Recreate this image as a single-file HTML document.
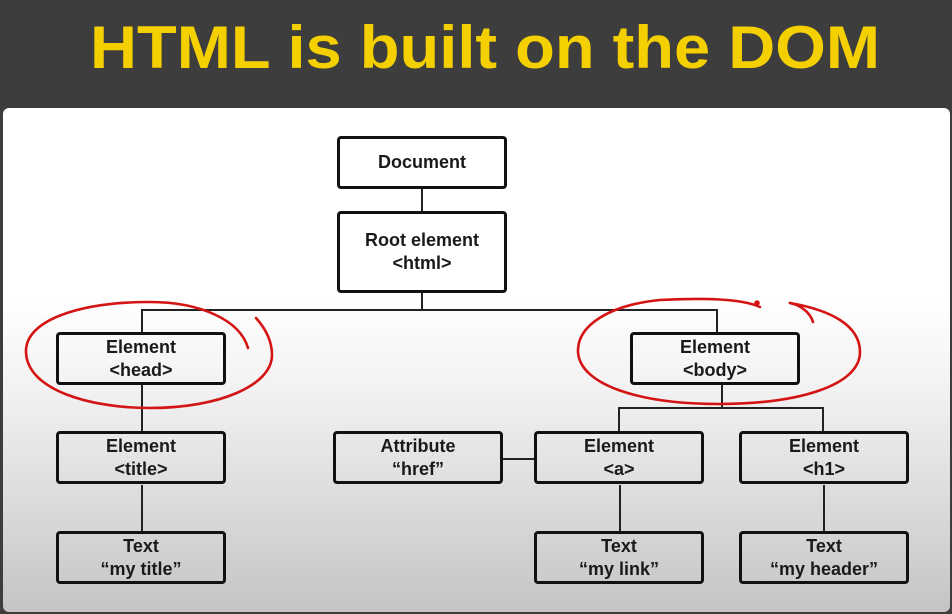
<!DOCTYPE html>
<html><head><meta charset="utf-8"><style>
*{margin:0;padding:0;box-sizing:border-box}
body{width:952px;height:614px;overflow:hidden;background:#3e3d3e;position:relative;font-family:"Liberation Sans",sans-serif}
.panel{position:absolute;left:3px;top:108px;width:947px;height:504px;border-radius:6px;background:linear-gradient(#fff 0,#fff 190px,#f2f2f2 280px,#d6d6d6 420px,#c4c4c4 504px)}
.b{position:absolute;border:3px solid #111;border-radius:4px;display:flex;flex-direction:column;justify-content:center;align-items:center;font-weight:bold;font-size:18px;line-height:23px;color:#1a1a1a;width:170px;height:53px}
.l{position:absolute;background:#222}
svg{position:absolute;left:0;top:0}
</style></head><body>
<svg width="952" height="110"><text x="90" y="68" textLength="790" lengthAdjust="spacingAndGlyphs" font-family="Liberation Sans" font-weight="bold" font-size="60" fill="#f5d000">HTML is built on the DOM</text></svg>
<div class="panel"></div>
<div class="l" style="left:421px;top:189px;width:2px;height:24px"></div>
<div class="l" style="left:421px;top:292px;width:2px;height:18px"></div>
<div class="l" style="left:141px;top:309px;width:577px;height:2px"></div>
<div class="l" style="left:141px;top:309px;width:2px;height:25px"></div>
<div class="l" style="left:716px;top:309px;width:2px;height:25px"></div>
<div class="l" style="left:141px;top:385px;width:2px;height:48px"></div>
<div class="l" style="left:721px;top:385px;width:2px;height:23px"></div>
<div class="l" style="left:618px;top:407px;width:205px;height:2px"></div>
<div class="l" style="left:618px;top:407px;width:2px;height:26px"></div>
<div class="l" style="left:822px;top:407px;width:2px;height:26px"></div>
<div class="l" style="left:503px;top:458px;width:33px;height:2px"></div>
<div class="l" style="left:141px;top:485px;width:2px;height:48px"></div>
<div class="l" style="left:619px;top:485px;width:2px;height:48px"></div>
<div class="l" style="left:823px;top:485px;width:2px;height:48px"></div>
<div class="b" style="left:337px;top:136px">Document</div>
<div class="b" style="left:337px;top:211px;height:82px"><span>Root element</span><span>&lt;html&gt;</span></div>
<div class="b" style="left:56px;top:332px"><span>Element</span><span>&lt;head&gt;</span></div>
<div class="b" style="left:630px;top:332px"><span>Element</span><span>&lt;body&gt;</span></div>
<div class="b" style="left:56px;top:431px"><span>Element</span><span>&lt;title&gt;</span></div>
<div class="b" style="left:333px;top:431px"><span>Attribute</span><span>“href”</span></div>
<div class="b" style="left:534px;top:431px"><span>Element</span><span>&lt;a&gt;</span></div>
<div class="b" style="left:739px;top:431px"><span>Element</span><span>&lt;h1&gt;</span></div>
<div class="b" style="left:56px;top:531px"><span>Text</span><span>“my title”</span></div>
<div class="b" style="left:534px;top:531px"><span>Text</span><span>“my link”</span></div>
<div class="b" style="left:739px;top:531px"><span>Text</span><span>“my header”</span></div>
<svg width="952" height="614" fill="none" stroke="#d41414" stroke-width="2.6" stroke-linecap="round">
<path d="M248,348 C240,320 200,302 150,302 C80,302 25,320 26,352 C27,390 90,408 150,408 C220,408 272,385 272,355 C272,340 265,328 256,318"/>
<path d="M760,307 C740,298 700,298 660,300 C610,305 577,325 578,352 C580,385 640,404 718,404 C800,404 860,385 860,352 C860,325 830,310 790,303"/>
<path d="M790,303 C800,305 810,312 813,322"/>
<circle cx="757" cy="303" r="1.5" fill="#d41414"/>
</svg>
</body></html>
